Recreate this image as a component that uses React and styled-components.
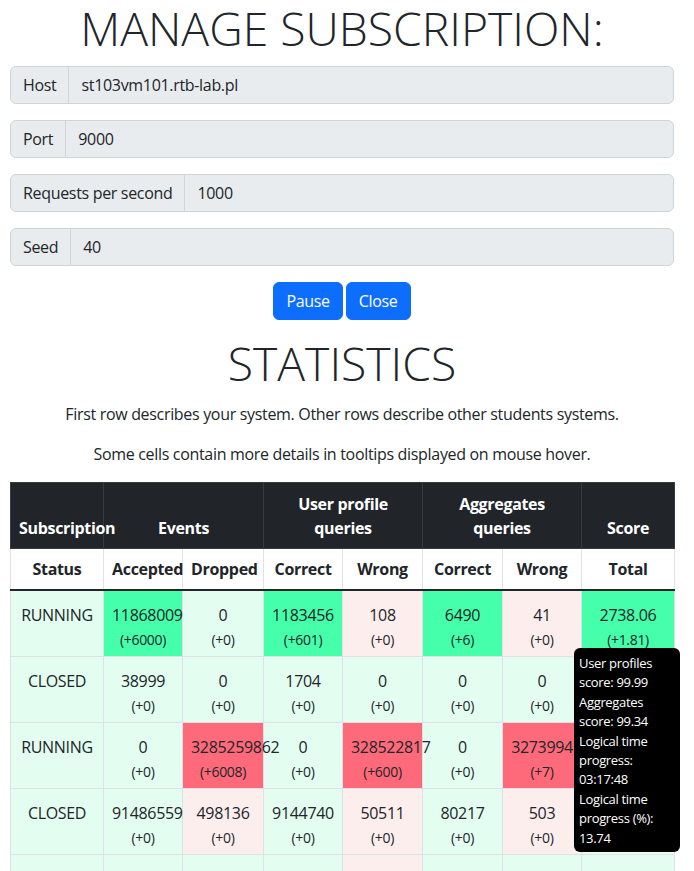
import React from "react";
import styled, { createGlobalStyle } from "styled-components";

const GlobalStyle = createGlobalStyle`
  * { box-sizing: border-box; }
  body {
    margin: 0;
    background: #fff;
    color: #212529;
    font-family: "Open Sans", "Noto Sans", "Liberation Sans", sans-serif;
    font-size: 16px;
    line-height: 1.5;
    letter-spacing: -0.02em;
  }
`;

const fields = [
  { label: "Host", value: "st103vm101.rtb-lab.pl" },
  { label: "Port", value: "9000" },
  { label: "Requests per second", value: "1000" },
  { label: "Seed", value: "40" },
];

// tone: ok = light green, hi = bright green, warn = light pink, bad = red
const rows = [
  {
    status: "RUNNING",
    cells: [
      ["11868009", "+6000", "hi"],
      ["0", "+0", "ok"],
      ["1183456", "+601", "hi"],
      ["108", "+0", "warn"],
      ["6490", "+6", "hi"],
      ["41", "+0", "warn"],
      ["2738.06", "+1.81", "hi"],
    ],
  },
  {
    status: "CLOSED",
    cells: [
      ["38999", "+0", "ok"],
      ["0", "+0", "ok"],
      ["1704", "+0", "ok"],
      ["0", "+0", "ok"],
      ["0", "+0", "ok"],
      ["0", "+0", "ok"],
      ["0", "+0", "ok"],
    ],
  },
  {
    status: "RUNNING",
    cells: [
      ["0", "+0", "ok"],
      ["3285259862", "+6008", "bad"],
      ["0", "+0", "ok"],
      ["328522817", "+600", "bad"],
      ["0", "+0", "ok"],
      ["3273994", "+7", "bad"],
      ["0", "+0", "ok"],
    ],
  },
  {
    status: "CLOSED",
    cells: [
      ["91486559", "+0", "ok"],
      ["498136", "+0", "warn"],
      ["9144740", "+0", "ok"],
      ["50511", "+0", "warn"],
      ["80217", "+0", "ok"],
      ["503", "+0", "warn"],
      ["0", "+0", "ok"],
    ],
  },
  {
    status: "CLOSED",
    cells: [
      ["0", "+0", "ok"],
      ["0", "+0", "ok"],
      ["0", "+0", "ok"],
      ["0", "+0", "warn"],
      ["0", "+0", "ok"],
      ["0", "+0", "ok"],
      ["0", "+0", "ok"],
    ],
  },
];

const colWidths = [93, 79, 81, 79, 80, 80, 79, 93];

const App = () => {
  return (
    <>
      <GlobalStyle />
      <Page>
        <Title>MANAGE SUBSCRIPTION:</Title>

        {fields.map((f) => (
          <InputGroup key={f.label}>
            <GroupLabel>{f.label}</GroupLabel>
            <GroupInput value={f.value} readOnly disabled />
          </InputGroup>
        ))}

        <BtnRow>
          <Button>Pause</Button>
          <Button>Close</Button>
        </BtnRow>

        <Title $second>STATISTICS</Title>
        <Note>First row describes your system. Other rows describe other students systems.</Note>
        <Note>Some cells contain more details in tooltips displayed on mouse hover.</Note>

        <TableWrap>
          <Table>
            <colgroup>
              {colWidths.map((w, i) => (
                <Col key={i} $w={w} />
              ))}
            </colgroup>
            <thead>
              <DarkRow>
                <DarkTh>Subscription</DarkTh>
                <DarkTh colSpan={2}>Events</DarkTh>
                <DarkTh colSpan={2}>User profile queries</DarkTh>
                <DarkTh colSpan={2}>Aggregates queries</DarkTh>
                <DarkTh>Score</DarkTh>
              </DarkRow>
              <tr>
                <SubTh>Status</SubTh>
                <SubTh>Accepted</SubTh>
                <SubTh>Dropped</SubTh>
                <SubTh>Correct</SubTh>
                <SubTh>Wrong</SubTh>
                <SubTh>Correct</SubTh>
                <SubTh>Wrong</SubTh>
                <SubTh>Total</SubTh>
              </tr>
            </thead>
            <tbody>
              {rows.map((r, i) => (
                <tr key={i}>
                  <Cell $tone="ok">
                    <Value>{r.status}</Value>
                  </Cell>
                  {r.cells.map(([v, d, tone], j) => (
                    <Cell key={j} $tone={tone}>
                      <Value>{v}</Value>
                      <Delta>({d})</Delta>
                    </Cell>
                  ))}
                </tr>
              ))}
            </tbody>
          </Table>

          <Tooltip>
            User profiles
            <br />
            score: 99.99
            <br />
            Aggregates
            <br />
            score: 99.34
            <br />
            Logical time
            <br />
            progress:
            <br />
            03:17:48
            <br />
            Logical time
            <br />
            progress (%):
            <br />
            13.74
          </Tooltip>
        </TableWrap>
      </Page>
    </>
  );
};

export default App;

const tones = {
  ok: "#e3fdf0",
  hi: "#45ffab",
  warn: "#fdeeee",
  bad: "#ff6a7a",
};

const Page = styled.div`
  width: 694px;
  padding: 0 20px 0 10px;
  display: flex;
  flex-direction: column;
`;

const Title = styled.h1`
  margin: ${({ $second }) => ($second ? "16px 0 10px" : "1px 0 9px")};
  font-size: 46.3px;
  font-weight: 300;
  line-height: 56px;
  text-align: center;
  letter-spacing: 0;
`;

const InputGroup = styled.div`
  display: flex;
  height: 38px;
  margin-bottom: 16px;
  border: 1px solid #ced4da;
  border-radius: 6px;
  background: #e9ecef;
  overflow: hidden;
`;

const GroupLabel = styled.span`
  display: flex;
  align-items: center;
  padding: 0 12px;
  border-right: 1px solid #ced4da;
  white-space: nowrap;
`;

const GroupInput = styled.input`
  flex: 1;
  min-width: 0;
  border: 0;
  padding: 0 12px;
  background: transparent;
  font: inherit;
  letter-spacing: inherit;
  color: #212529;
  opacity: 1;
  -webkit-text-fill-color: #212529;
`;

const BtnRow = styled.div`
  display: flex;
  justify-content: center;
  gap: 3px;
`;

const Button = styled.button`
  height: 38px;
  padding: 0 12px;
  border: 1px solid #0d6efd;
  border-radius: 6px;
  background: #0d6efd;
  color: #fff;
  font: inherit;
  letter-spacing: inherit;
`;

const Note = styled.p`
  margin: 0 0 16px;
  text-align: center;
`;

const TableWrap = styled.div`
  position: relative;
`;

const Table = styled.table`
  width: 664px;
  table-layout: fixed;
  border-collapse: collapse;
  text-align: center;
`;

const Col = styled.col`
  width: ${({ $w }) => $w}px;
`;

const DarkRow = styled.tr`
  background: #212529;
  color: #fff;
`;

const DarkTh = styled.th`
  padding: 9px 8px 8px;
  vertical-align: bottom;
  border: 1px solid #373b3e;
  white-space: normal;
`;

const SubTh = styled.th`
  padding: 8px;
  background: #fff;
  border: 1px solid #dee2e6;
  border-bottom: 2px solid #212529;
  vertical-align: bottom;
  white-space: nowrap;
`;

const Cell = styled.td`
  padding: 12px 8px 6px;
  height: 66px;
  vertical-align: top;
  border: 1px solid #dee2e6;
  background: ${({ $tone }) => tones[$tone]};
  white-space: nowrap;
`;

const Value = styled.div`
  line-height: 24px;
`;

const Delta = styled.div`
  margin-top: 2px;
  font-size: 14px;
  line-height: 21px;
`;

const Tooltip = styled.div`
  position: absolute;
  left: 564px;
  top: 166px;
  width: 106px;
  padding: 6px 5px 4px;
  border-radius: 6px;
  background: #000;
  color: #fff;
  font-size: 13px;
  line-height: 19.4px;
  white-space: nowrap;
`;
